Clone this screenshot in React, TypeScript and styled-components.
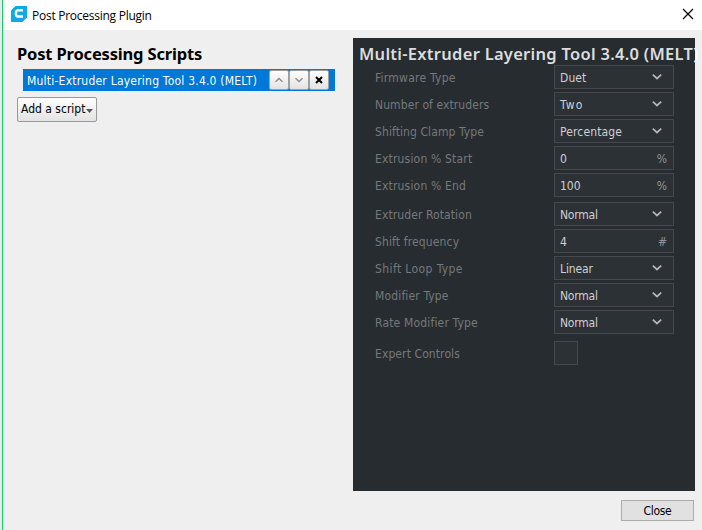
import React from "react";
import styled, { createGlobalStyle } from "styled-components";

const GlobalStyle = createGlobalStyle`
  * { box-sizing: border-box; }
  body { margin: 0; overflow: hidden; background: #efefef; }
  button { padding: 0; margin: 0; font: inherit; }
`;

const Window = styled.div`
  width: 700px;
  height: 530px;
  overflow: hidden;
  display: flex;
  flex-direction: column;
  background: #efefef;
  border-left: 1px solid #12ce6c;
  margin-left: 2px;
  font-family: "DejaVu Sans Condensed", "DejaVu Sans", sans-serif;
  font-stretch: condensed;
  font-size: 12px;
  line-height: 16px;
  color: #000;
`;

const Backdrop = styled.div`
  width: 702px;
  height: 530px;
  overflow: hidden;
  background: #e9e9e9;
`;

const TitleBar = styled.header`
  height: 30px;
  flex: none;
  width: 699px;
  display: flex;
  align-items: center;
  padding: 0 8px;
  background: #fff;
  font-family: "Open Sans", "Noto Sans", sans-serif;
  font-stretch: normal;
`;

const Logo = styled.svg`
  width: 16px;
  height: 16px;
  margin-top: -2px;
`;

const Title = styled.span`
  flex: 1;
  margin-left: 5px;
  padding-top: 1px;
  letter-spacing: -0.26px;
  white-space: nowrap;
`;

const CloseIcon = styled.svg`
  width: 12px;
  height: 12px;
  margin-top: -2px;
`;

const Body = styled.main`
  flex: 1;
  display: flex;
  padding: 8px 0 0 14px;
`;

const ScriptColumn = styled.section`
  width: 336px;
`;

const Heading = styled.h1<{ $light?: boolean; $spacing: number }>`
  margin: 0;
  height: ${(p) => (p.$light ? 27 : 31)}px;
  padding-top: 6px;
  font-family: "Noto Sans", sans-serif;
  font-stretch: normal;
  font-size: 16.5px;
  line-height: 20px;
  font-weight: ${(p) => (p.$light ? 600 : 700)};
  white-space: nowrap;
  letter-spacing: ${(p) => p.$spacing}px;
  color: ${(p) => (p.$light ? "#dcdddd" : "#000")};
`;

const Overhang = styled.span`
  color: #fafafa;
`;

const ScriptRow = styled.div`
  width: 312px;
  height: 22px;
  margin-left: 6px;
  padding: 1px 6px 0 4px;
  display: flex;
  align-items: flex-start;
  background: #0078d7;
  color: #fff;
`;

const ScriptName = styled.span<{ $spacing: number }>`
  flex: 1;
  line-height: 22px;
  white-space: nowrap;
  letter-spacing: ${(p) => p.$spacing}px;
`;

const MiniButton = styled.button`
  width: 20px;
  height: 20px;
  display: flex;
  align-items: center;
  justify-content: center;
  border: 1px solid #a0a0a0;
  border-radius: 2px;
  background: linear-gradient(#fefefe, #e3e3e3);
`;

const AddButton = styled.button`
  width: 80px;
  height: 25px;
  margin-top: 6px;
  padding: 0 3px 1px;
  display: flex;
  align-items: center;
  justify-content: space-between;
  border: 1px solid #999;
  border-radius: 2px;
  background: linear-gradient(#fefefe, #e3e3e3);
  white-space: nowrap;
`;

const AddArrow = styled.svg`
  width: 7px;
  height: 4px;
  flex: none;
  margin-top: 3px;
`;

const SettingsColumn = styled.section`
  width: 342px;
`;

const SettingsPanel = styled.div`
  height: 453px;
  padding-left: 6px;
  background: #272c30;
`;

const Settings = styled.div`
  padding-left: 16px;
`;

const SettingRow = styled.label<{ $gap: number }>`
  display: flex;
  align-items: center;
  height: 24px;
  margin-bottom: ${(p) => p.$gap}px;
`;

const SettingLabel = styled.span<{ $spacing: number }>`
  width: 179px;
  padding-top: 2px;
  color: #75797b;
  white-space: nowrap;
  letter-spacing: ${(p) => p.$spacing}px;
`;

const Field = styled.span<{ $narrow?: boolean }>`
  width: ${(p) => (p.$narrow ? 24 : 120)}px;
  height: 24px;
  padding: 0 6px 0 5px;
  display: flex;
  align-items: center;
  justify-content: space-between;
  border: 1px solid #45494c;
  background: #2c3135;
  color: #cfd0d1;
`;

const Value = styled.span<{ $spacing: number }>`
  padding-top: 2px;
  letter-spacing: ${(p) => p.$spacing}px;
`;

const Unit = styled.span`
  padding-top: 2px;
  color: #92969a;
`;

const Chevron = styled.svg`
  width: 12px;
  height: 8px;
  margin-right: 4px;
`;

const Footer = styled.footer`
  display: flex;
  justify-content: flex-end;
  padding: 9px 1px 0 0;
`;

const CloseButton = styled.button`
  width: 73px;
  height: 21px;
  padding-top: 2px;
  border: 1px solid #adadad;
  background: #e1e1e1;
  line-height: 17px;
  letter-spacing: -0.3px;
`;

type Setting = {
  label: string;
  spacing: number;
  kind: "select" | "number" | "check";
  value?: string;
  valueSpacing?: number;
  unit?: string;
  gap?: number;
};

const settings: Setting[] = [
  { label: "Firmware Type", spacing: 0.25, kind: "select", value: "Duet", valueSpacing: 0.1 },
  { label: "Number of extruders", spacing: 0.09, kind: "select", value: "Two", valueSpacing: 1.2 },
  { label: "Shifting Clamp Type", spacing: 0.09, kind: "select", value: "Percentage", valueSpacing: 0.15 },
  { label: "Extrusion % Start", spacing: 0.18, kind: "number", value: "0", unit: "%" },
  { label: "Extrusion % End", spacing: 0.18, kind: "number", value: "100", unit: "%", gap: 5 },
  { label: "Extruder Rotation", spacing: 0.1, kind: "select", value: "Normal", valueSpacing: -0.2 },
  { label: "Shift frequency", spacing: 0.14, kind: "number", value: "4", unit: "#" },
  { label: "Shift Loop Type", spacing: 0.4, kind: "select", value: "Linear", valueSpacing: -0.1 },
  { label: "Modifier Type", spacing: 0.15, kind: "select", value: "Normal", valueSpacing: -0.2 },
  { label: "Rate Modifier Type", spacing: 0.17, kind: "select", value: "Normal", valueSpacing: -0.2, gap: 7 },
  { label: "Expert Controls", spacing: 0.1, kind: "check" },
];

const SettingField = ({ item }: { item: Setting }) => (
  <Field $narrow={item.kind === "check"}>
    {item.value && <Value $spacing={item.valueSpacing ?? 0}>{item.value}</Value>}
    {item.unit && <Unit>{item.unit}</Unit>}
    {item.kind === "select" && (
      <Chevron viewBox="0 0 12 8">
        <path d="M1.8 1.7L6 5.5L10.2 1.7" fill="none" stroke="#b4b6b7" strokeWidth="1.7" />
      </Chevron>
    )}
  </Field>
);

export default function App() {
  return (
    <Backdrop>
      <GlobalStyle />
      <Window>
        <TitleBar>
          <Logo viewBox="0 0 16 16">
            <path d="M4.5 0H16V11.5L11.5 16H0V4.5Z" fill="#0fa9e6" />
            <path d="M12 4.4H7Q5 4.4 5 6.3V8.6Q5 10.5 7 10.5H12" fill="none" stroke="#fff" strokeWidth="2.4" />
          </Logo>
          <Title>Post Processing Plugin</Title>
          <CloseIcon viewBox="0 0 12 12">
            <path d="M1 1L11 11M11 1L1 11" stroke="#000" strokeWidth="1.2" />
          </CloseIcon>
        </TitleBar>
        <Body>
          <ScriptColumn>
            <Heading $spacing={-0.17}>Post Processing Scripts</Heading>
            <ScriptRow>
              <ScriptName $spacing={0.22}>Multi-Extruder Layering Tool 3.4.0 (MELT)</ScriptName>
              <MiniButton>
                <svg width="10" height="6" viewBox="0 0 10 6">
                  <path d="M1.5 4.8L5 1.5L8.5 4.8" fill="none" stroke="#8e8e8e" strokeWidth="1.4" />
                </svg>
              </MiniButton>
              <MiniButton>
                <svg width="10" height="6" viewBox="0 0 10 6">
                  <path d="M1.5 1.2L5 4.5L8.5 1.2" fill="none" stroke="#8e8e8e" strokeWidth="1.4" />
                </svg>
              </MiniButton>
              <MiniButton>
                <svg width="8" height="8" viewBox="0 0 8 8">
                  <path d="M1 1L7 7M7 1L1 7" stroke="#000" strokeWidth="2" />
                </svg>
              </MiniButton>
            </ScriptRow>
            <AddButton>
              <span>Add a script</span>
              <AddArrow viewBox="0 0 7 4">
                <path d="M0 0H7L3.5 4Z" fill="#555" />
              </AddArrow>
            </AddButton>
          </ScriptColumn>
          <SettingsColumn>
            <SettingsPanel>
              <Heading $light $spacing={0.28}>
                Multi-Extruder Layering Tool 3.4.0 (MELT<Overhang>)</Overhang>
              </Heading>
              <Settings>
                {settings.map((item) => (
                  <SettingRow key={item.label} $gap={item.gap ?? 3}>
                    <SettingLabel $spacing={item.spacing}>{item.label}</SettingLabel>
                    <SettingField item={item} />
                  </SettingRow>
                ))}
              </Settings>
            </SettingsPanel>
            <Footer>
              <CloseButton>Close</CloseButton>
            </Footer>
          </SettingsColumn>
        </Body>
      </Window>
    </Backdrop>
  );
}
